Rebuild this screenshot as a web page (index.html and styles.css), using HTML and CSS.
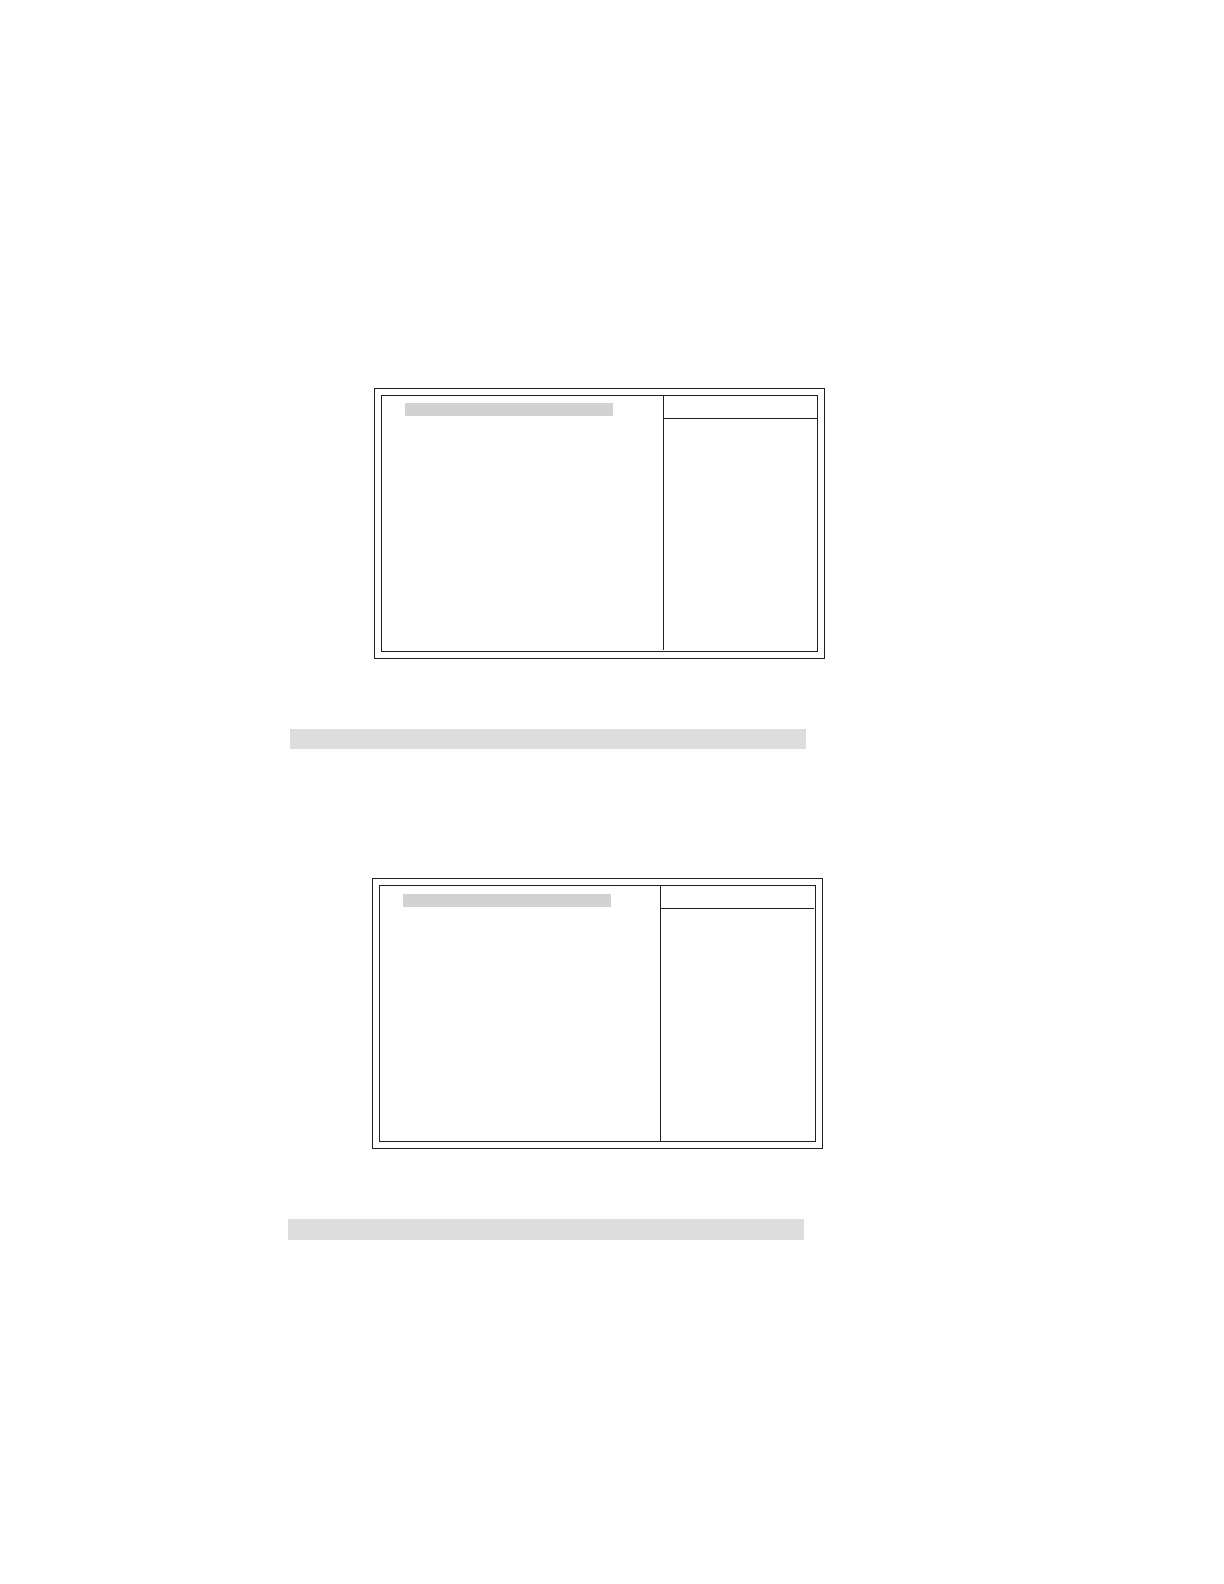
FILE: index.html
```html
<!DOCTYPE html>
<html lang="en">
<head>
    <meta charset="UTF-8">
    <meta name="viewport" content="width=device-width, initial-scale=1.0">
    <link rel="stylesheet" href="styles.css">
</head>
<body>
    <main class="page">
        <section class="setup setup-first">
            <div class="screen">
                <div class="screen-inner">
                    <div class="options">
                        <div class="selected-row"></div>
                    </div>
                    <aside class="help">
                        <div class="help-header"></div>
                    </aside>
                </div>
            </div>
            <div class="band"></div>
        </section>

        <section class="setup setup-second">
            <div class="screen">
                <div class="screen-inner">
                    <div class="options">
                        <div class="selected-row"></div>
                    </div>
                    <aside class="help">
                        <div class="help-header"></div>
                    </aside>
                </div>
            </div>
            <div class="band"></div>
        </section>
    </main>
</body>
</html>
```
FILE: styles.css
```css
* {
    margin: 0;
    padding: 0;
    box-sizing: border-box;
}

body {
    font-family: "Liberation Sans", Arial, sans-serif;
    background: #fff;
    color: #231f20;
}

.page {
    min-height: 100vh;
    padding-top: 388px;
    display: flex;
    flex-direction: column;
    gap: 129px;
}

/* left margin, content, right margin */
.setup {
    display: grid;
    grid-template-columns: 290fr 535fr 399fr;
    row-gap: 70px;
}

.setup-second {
    grid-template-columns: 288fr 535fr 401fr;
}

.screen,
.band {
    grid-column: 2;
}

/* double frame */
.screen {
    margin-left: 84px;
    padding: 6px;
    border: 1px solid #231f20;
}

.screen-inner {
    display: grid;
    grid-template-columns: 281fr 154fr;
    min-height: 257px;
    border: 1px solid #231f20;
}

.setup-second .screen-inner {
    grid-template-columns: 280fr 155fr;
}

.options {
    padding: 7px 50px 0 23px;
}

.setup-second .options {
    padding: 8px 49px 0 23px;
}

.selected-row {
    height: 13px;
    background: #d2d2d2;
}

.help {
    border-left: 1px solid #231f20;
}

.setup-first .help {
    margin-bottom: 1px;
}

.help-header {
    height: 23px;
    border-bottom: 1px solid #231f20;
}

.setup-second .help-header {
    margin-right: 1px;
}

.band {
    height: 20px;
    margin-right: 19px;
    background: #ddd;
}

.setup-second .band {
    height: 21px;
}
```
